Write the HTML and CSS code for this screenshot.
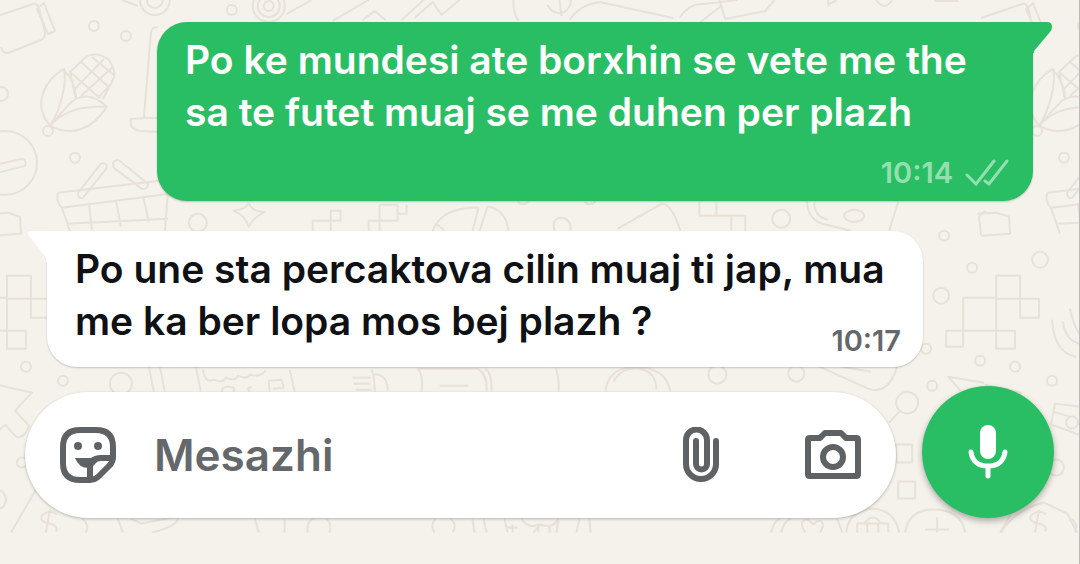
FILE: index.html
```
<!DOCTYPE html>
<html lang="sq">
<head>
  <meta charset="UTF-8">
  <meta name="viewport" content="width=device-width, initial-scale=1.0">
  <title>Chat</title>
  <link rel="stylesheet" href="styles.css">
</head>
<body>
  <svg class="wallpaper" viewBox="0 0 1080 533" preserveAspectRatio="xMinYMin slice" aria-hidden="true">
    <defs>
      <!-- doodles that repeat on both sides of the chat -->
      <g id="doodles">
        <path d="M-8 18 L33 4 Q37 3 39 8 L45 32 Q46 37 41 40 L8 53 Q3 54 1 47 M37 9 L44 3 L55 31 L48 34 Z"/>
        <path d="M50 126 C32 104 45 80 64 69 C67 80 62 108 50 126 C62 112 73 99 76 99 M63 70 C71 75 76 90 76 99 C88 93 99 99 107 107 C91 132 70 136 50 126 C65 109 85 106 107 107 M76 99 L70 72 L86 57 Q97 51 109 60 Q118 73 112 82 L103 99 M70 72 L100 98 M80 61 L110 88 M92 57 L114 75 M75 89 L104 59 M81 96 L113 67 M98 98 L112 83"/>
        <circle cx="48" cy="131" r="5"/>
        <circle cx="94" cy="26" r="5"/>
        <circle cx="126" cy="36" r="5"/>
        <circle cx="1" cy="94" r="7"/>
        <circle cx="75" cy="158" r="5"/>
        <circle cx="5" cy="163" r="32"/>
        <path d="M-10 166 L22 159 Q27 160 25 166 L-6 174"/>
        <path d="M158 27 Q152 27 151 33 L144 118 L131 119 Q129 129 140 131 L160 132 M160 118 H144"/>
        <path d="M58 193 L168 180 M58 193 Q56 203 62 208 L170 194 M62 208 L71 234 M89 203 L92 230 M116 200 L121 227 M143 196 L149 222 M168 194 L165 231 M67 224 L168 219"/>
        <path d="M78 193 L101 164 Q107 162 107 168 L83 198 Q78 199 78 193 M113 163 Q117 158 121 162 L148 184 Q148 190 142 189 L114 168 Z"/>
        <path d="M-12 214 L8 213 L20 217 L21 234 L-8 236"/>
        <path d="M7 276 H31 V299 H7 Z M-26 298 H7 V331 H-26 Z M7 299 V331 M31 299 H50 V318 H31 Z M7 331 H26 V349 H7 Z M-43 331 H-26 V347 H-43 Z"/>
        <circle cx="26" cy="367" r="5"/>
        <circle cx="63" cy="381" r="5"/>
        <path d="M-4 385 L32 393 L15 411 L29 426 Q24 440 16 437 L5 425 L-4 434 M36 490 L11 533"/>
        <circle cx="-4" cy="500" r="10"/>
        <circle cx="22" cy="463" r="5"/>
        <path d="M57 515 Q50 509 42 516 Q39 522 49 524 Q59 526 56 532 M50 510 L46 533 M82 519 Q90 525 86 533"/>
      </g>
    </defs>
    <use href="#doodles"/>
    <use href="#doodles" x="990"/>
    <path d="M122 0 L138 6 M140 0 A15 15 0 1 0 170 0 M147 0 A8 8 0 1 0 163 0"/>
    <circle cx="232" cy="10" r="5"/>
    <circle cx="269" cy="6" r="16"/>
    <circle cx="269" cy="6" r="11"/>
    <circle cx="269" cy="6" r="5"/>
    <path d="M287 14 L312 0 M333 21 L369 0 M363 20 L375 11 L386 20 M402 20 L426 -2 M415 18 L433 2 L442 15 L461 -1 M514 0 Q513 12 519 21 M548 5 Q554 16 565 12 Q575 4 569 -4 M560 0 L562 16 M570 20 Q580 5 600 2 M600 2 L674 18"/>
    <path d="M680 18 Q690 3 704 4 L738 0 M701 22 L722 6 M720 0 L726 19 L766 11 L775 0 M829 -2 V7 M838 0 L830 4 M877 0 Q885 12 893 0 M935 1 H959"/>
    <path d="M249 203 Q252 212 265 212 Q253 218 249 227 Q246 216 234 211 Q247 209 249 203"/>
    <circle cx="198" cy="223" r="9"/>
    <path d="M313 231 V221 H331 V211 H341 V221 H331 V231 M369 231 V221 H398 V205 H380 V231 M398 214 H407 V205 M433 231 Q442 207 479 208 L473 231 M480 231 L488 207 Q506 209 509 231 M437 224 L445 231 M555 231 Q552 218 562 218 Q572 219 571 231 M518 202 Q523 207 529 202 M585 202 Q590 207 596 202 M618 229 L662 204 Q672 203 681 231 M700 202 V216 H717 V203 M717 216 H746 V231 M732 216 V231"/>
    <circle cx="782" cy="219" r="9"/>
    <path d="M808 201 Q808 219 823 224 L852 231 M815 203 Q815 217 829 220 M899 202 L890 231"/>
    <ellipse cx="855" cy="216" rx="10" ry="6"/>
    <path d="M982 235 L980 218 Q981 214 985 212 L991 214 M1071 309 Q1080 350 1100 340 M1053 320 Q1055 353 1077 357 M1064 322 Q1066 340 1080 344"/>
    <circle cx="945" cy="236" r="5"/>
    <circle cx="973" cy="268" r="5"/>
    <circle cx="1041" cy="260" r="8"/>
    <circle cx="942" cy="296" r="8"/>
    <circle cx="927" cy="349" r="5"/>
    <circle cx="981" cy="361" r="5"/>
    <circle cx="121" cy="384" r="11"/>
    <path d="M149 367 L154 392 M160 367 L165 392 M196 367 L201 392 M203 370 Q205 384 214 380 Q224 384 226 378 Q236 382 238 376 Q248 380 250 375 Q260 378 266 371 M290 370 L295 392 M222 392 Q222 385 234 388 V392 M250 392 Q246 387 252 388 M270 392 L269 381 L282 380 L284 388 L273 389 M353 378 H371 M354 384 H371 M356 390 H372 M372 370 Q375 378 375 392 M374 375 Q388 374 388 391"/>
    <path d="M418 369 Q424 374 422 392 M418 369 H478 Q488 374 487 392 M485 368 Q493 374 492 392 M440 386 H469 M556 368 Q560 378 559 392 M606 392 Q608 369 634 367 Q667 367 671 392 M614 382 Q622 367 640 369 Q657 372 657 390"/>
    <circle cx="718" cy="375" r="9"/>
    <circle cx="797" cy="374" r="8"/>
    <path d="M820 367 L869 389 Q889 396 898 367 M842 367 L872 372"/>
    <circle cx="933" cy="386" r="5"/>
    <circle cx="908" cy="403" r="11"/>
    <path d="M901 411 L890 423 M962 392 L949 377 L985 383 M897 445 H913 V463 H897 Z M899 482 H916 V499 H899 Z M1052 425 L1056 404 L1080 407 M1052 425 L1080 435 M1054 412 L1071 417"/>
    <circle cx="1073" cy="423" r="6"/>
    <circle cx="1057" cy="468" r="8"/>
    <path d="M118 519 L123 533 M131 519 L141 524 L178 517 Q180 526 152 533 M255 519 L259 533 M285 520 V533 M308 533 Q306 520 317 518 M330 533 Q332 522 326 519"/>
    <path d="M436 519 Q430 526 435 533 M451 519 Q458 525 453 533 M473 520 L475 533 M484 519 L487 533 M505 519 L508 533 M508 528 H518 M522 519 Q528 530 539 525 V533 M513 525 V533 M534 533 L541 525 Q554 530 559 519 M550 533 V527 M559 520 L557 533 M580 519 L577 533 M590 519 L591 533"/>
    <path d="M772 533 Q774 522 781 519 M782 533 Q784 522 792 519 M806 533 Q798 520 809 520 L814 525 Q822 517 824 526 L821 533 M843 533 L838 519 M847 533 Q849 511 874 509 Q896 511 900 533 M858 533 V524 H889 V533 M865 524 Q874 512 882 524 M868 524 V533 M879 524 V533 M906 533 Q910 511 932 510 Q962 509 966 533 M926 530 H950 M938 518 V533 M1002 533 Q1016 510 1045 503 L1068 514 L1078 533"/>
  </svg>

  <main class="chat">
    <section class="messages">
      <article class="bubble sent">
        <svg class="tail" viewBox="0 0 20 31" aria-hidden="true"><path d="M0 0 H14 Q19 0 19 5 Q19 8 17 10 L1 29 V31 H0 Z"/></svg>
        <p>Po ke mundesi ate borxhin se vete me the sa te futet muaj se me duhen per plazh</p>
        <footer class="meta">
          <time>10:14</time>
          <svg class="ticks" viewBox="0 0 44 28" aria-hidden="true"><path d="M2 16 L11 25 L29 2 M20 22 L24 25 L42 2"/></svg>
        </footer>
      </article>

      <article class="bubble received">
        <svg class="tail" viewBox="0 0 20 31" aria-hidden="true"><path d="M20 0 H3 Q-1 1 2 5 L19 27 V31 H20 Z"/></svg>
        <p>Po une sta percaktova cilin muaj ti jap, mua me ka ber lopa mos bej plazh ?</p>
        <time>10:17</time>
      </article>
    </section>

    <form class="composer">
      <div class="field">
        <button type="button" aria-label="Emoji">
          <svg viewBox="0 0 56 56">
            <path class="line" d="M30 53 H20 Q3 53 3 36 V20 Q3 3 20 3 H36 Q53 3 53 20 V30 Q53 35 49 39 L39 49 Q35 53 30 53 M30 53 V42 Q30 31 41 31 H53"/>
            <circle cx="18" cy="19" r="4"/>
            <circle cx="38" cy="19" r="4"/>
            <path d="M15 31 H41 L31 41 Q19 42 15 31 Z"/>
          </svg>
        </button>
        <input type="text" name="message" placeholder="Mesazhi" aria-label="Mesazhi">
        <button type="button" class="attach" aria-label="Attach">
          <svg viewBox="0 0 56 56"><path class="line" d="M44 14 V37 A15 15 0 0 1 14 37 V13 A10 10 0 0 1 35 13 V37 A5 5 0 0 1 24 37 V14"/></svg>
        </button>
        <button type="button" aria-label="Camera">
          <svg viewBox="0 0 56 56">
            <path class="line" d="M5 11 H15 L20 6 H36 L41 11 H51 Q53 11 53 13 V47 Q53 49 51 49 H5 Q3 49 3 47 V13 Q3 11 5 11 Z"/>
            <circle class="line" cx="28" cy="30" r="10"/>
          </svg>
        </button>
      </div>
      <button type="button" class="mic" aria-label="Voice message">
        <svg viewBox="0 0 40 54">
          <rect x="12" y="0" width="16" height="34" rx="8"/>
          <path class="wave" d="M3 27 Q5 41 20 41 Q35 41 37 27 M20 41 V51"/>
        </svg>
      </button>
    </form>
  </main>
</body>
</html>
```
FILE: styles.css
```
* {
  box-sizing: border-box;
}

body {
  margin: 0;
  min-height: 100vh;
  position: relative;
  overflow-x: hidden;
  background-color: #f5f1eb;
  border-right: 1px solid #bdbbb8;
  font-family: Inter, "Liberation Sans", sans-serif;
  color: #0f1114;
}

/* doodle wallpaper behind the messages */
.wallpaper {
  position: absolute;
  top: 0;
  left: 0;
  width: 100%;
  fill: none;
  stroke: #e8e1d8;
  stroke-width: 2;
  stroke-linejoin: round;
}

.chat {
  position: relative;
  padding: 22px 25px 45px;
}

.messages {
  display: flex;
  flex-direction: column;
  gap: 30px;
  padding: 0 21px 0 22px;
}

.bubble {
  position: relative;
  border-radius: 30px;
  padding: 12px 28px;
  width: 876px;
  max-width: 90%;
  box-shadow: 0 1px 2px rgba(0, 0, 0, 0.2);
}

.bubble p {
  margin: 0;
  font-size: 39px;
  font-weight: 600;
  line-height: 52px;
}

.bubble time {
  font-size: 29px;
  font-weight: 600;
  line-height: 36px;
}

.tail {
  position: absolute;
  top: 0;
  width: 20px;
  height: 31px;
  fill: currentColor;
}

.sent {
  align-self: flex-end;
  background-color: #2abe64;
  border-top-right-radius: 0;
  padding-bottom: 10px;
  color: #ffffff;
}

.sent .tail {
  left: 100%;
  color: #2abe64;
}

.meta {
  display: flex;
  justify-content: flex-end;
  align-items: center;
  gap: 12px;
  margin-top: 17px;
  margin-right: -4px;
  color: #94dfb2;
}

.ticks {
  width: 44px;
  height: 28px;
  fill: none;
  stroke: currentColor;
  stroke-width: 3;
  stroke-linecap: round;
}

.received {
  background-color: #ffffff;
  border-top-left-radius: 0;
  padding-bottom: 20px;
}

.received .tail {
  right: 100%;
  color: #ffffff;
}

/* time sits in the free corner of the last line */
.received time {
  position: absolute;
  right: 22px;
  bottom: 8px;
  color: #65686b;
}

.composer {
  display: flex;
  align-items: flex-end;
  gap: 26px;
  margin-top: 19px;
}

.composer button {
  padding: 0;
  border: none;
  background: none;
  color: #5f6265;
  cursor: pointer;
}

.field {
  flex: 1;
  min-width: 0;
  height: 126px;
  display: flex;
  align-items: center;
  padding: 0 35px;
  border-radius: 63px;
  background-color: #ffffff;
  box-shadow: 0 1px 3px rgba(0, 0, 0, 0.25);
}

.field svg {
  display: block;
  width: 56px;
  height: 56px;
  fill: currentColor;
}

.field .line {
  fill: none;
  stroke: currentColor;
  stroke-width: 6;
  stroke-linecap: round;
  stroke-linejoin: round;
}

.field input {
  flex: 1;
  min-width: 0;
  margin: 0 38px;
  padding: 0;
  border: none;
  outline: none;
  background: none;
  font-family: inherit;
  font-size: 44px;
  font-weight: 600;
  color: #0f1114;
}

.field input::placeholder {
  color: #65686b;
  opacity: 1;
}

.attach {
  margin-right: 77px;
}

.composer .mic {
  flex: none;
  display: flex;
  align-items: center;
  justify-content: center;
  width: 132px;
  height: 132px;
  border-radius: 50%;
  background-color: #2abe64;
  color: #ffffff;
  box-shadow: 0 3px 6px rgba(0, 0, 0, 0.3);
}

.mic svg {
  width: 40px;
  height: 54px;
  fill: currentColor;
}

.mic .wave {
  fill: none;
  stroke: currentColor;
  stroke-width: 5;
  stroke-linecap: round;
}
```
